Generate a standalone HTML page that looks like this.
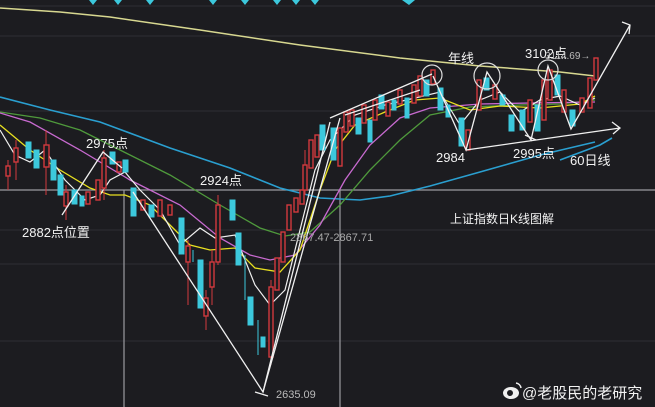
<!DOCTYPE html>
<html><head><meta charset="utf-8"><style>
html,body{margin:0;padding:0;background:#1c1c20;width:655px;height:407px;overflow:hidden}
svg{display:block}
text{font-family:"Liberation Sans","Noto Sans CJK SC",sans-serif;fill:#f2f2f2}
.r{fill:#1c1c20;stroke:#d23a3e;stroke-width:1.4}
.c{fill:#3cc8dc;stroke:#3cc8dc;stroke-width:1}
.w{fill:none;stroke:#f0f0f0;stroke-width:1.3}
</style></head><body>
<svg width="655" height="407" viewBox="0 0 655 407" xmlns="http://www.w3.org/2000/svg">
<rect width="655" height="407" fill="#1c1c20"/>
<g stroke="#2e2e34" stroke-width="1">
<line x1="0" y1="6" x2="655" y2="6"/><line x1="0" y1="36" x2="655" y2="36"/><line x1="0" y1="111" x2="655" y2="111"/>
<line x1="0" y1="230" x2="655" y2="230"/><line x1="0" y1="264" x2="655" y2="264"/><line x1="0" y1="341" x2="655" y2="341"/>
</g>
<g stroke="#9a9aa0" stroke-width="1.2"><line x1="0" y1="190" x2="655" y2="190"/><line x1="124" y1="190" x2="124" y2="407"/><line x1="340" y1="190" x2="340" y2="407"/></g>
<g fill="#3cc8dc">
<path d="M89 0h8l-4 5z"/><path d="M114 0h8l-4 5z"/><path d="M146 0h8l-4 5z"/><path d="M209 0h8l-4 5z"/><path d="M241 0h8l-4 5z"/><path d="M273 0h8l-4 5z"/><path d="M292 0h8l-4 5z"/><path d="M311 0h8l-4 5z"/><path d="M402 0h13l-6 5z"/>
</g>
<!-- MAs -->
<polyline fill="none" stroke="#d8d890" stroke-width="1.5" points="0,8 60,12 110,17 200,30 300,45 400,58 480,66 560,72 595,76"/>
<polyline fill="none" stroke="#2a9fd0" stroke-width="1.6" points="0,97 50,110 100,122 170,148 230,168 280,188 320,198 360,200 390,196 430,186 480,172 540,155 595,142"/>
<polyline fill="none" stroke="#4f9a3c" stroke-width="1.3" points="0,112 40,118 80,130 120,150 170,175 220,205 260,228 285,236 310,232 340,205 370,170 400,140 430,115 470,107 520,105 560,104 595,100"/>
<polyline fill="none" stroke="#c86ad0" stroke-width="1.3" points="0,113 30,122 80,150 130,180 180,205 220,238 250,255 270,260 295,255 320,225 345,180 370,145 400,118 430,108 480,104 530,103 595,102"/>
<polyline fill="none" stroke="#e8e020" stroke-width="1.3" points="0,125 30,150 60,170 90,188 110,195 125,195 150,205 170,225 190,245 210,250 235,248 255,268 280,272 300,250 320,190 335,150 355,125 385,112 415,100 440,98 470,110 500,106 540,108 580,104 595,96"/>
<polyline fill="none" stroke="#f0f0f0" stroke-width="1.2" points="0,130 15,155 30,162 45,150 65,180 85,200 100,195 110,180 125,172 140,190 160,210 180,245 200,228 215,238 235,235 255,285 270,305 285,290 300,230 315,170 330,140 355,115 385,105 415,98 440,92 460,125 480,100 500,92 520,112 540,100 560,96 580,105 595,98"/>
<!-- candles -->
<g>
<line x1="8" y1="160" x2="8" y2="190" stroke="#d23a3e"/><rect class="r" x="6" y="166" width="4" height="10"/>
<line x1="16" y1="140" x2="16" y2="180" stroke="#d23a3e"/><rect class="r" x="14" y="148" width="4" height="14"/>
<rect class="c" x="26" y="142" width="5" height="16"/><rect class="c" x="34" y="150" width="5" height="18"/>
<line x1="46" y1="130" x2="46" y2="195" stroke="#d23a3e"/><rect class="r" x="44" y="145" width="5" height="22"/>
<rect class="c" x="51" y="160" width="5" height="20"/><rect class="c" x="58" y="175" width="5" height="20"/>
<line x1="66" y1="185" x2="66" y2="220" stroke="#d23a3e"/><rect class="r" x="64" y="192" width="4" height="14"/>
<rect class="c" x="72" y="190" width="5" height="14"/><rect class="c" x="80" y="196" width="4" height="10"/>
<rect class="r" x="86" y="192" width="4" height="12"/><rect class="r" x="96" y="180" width="4" height="20"/>
<line x1="104" y1="150" x2="104" y2="200" stroke="#d23a3e"/><rect class="r" x="102" y="158" width="4" height="30"/>
<rect class="c" x="110" y="152" width="5" height="12"/><rect class="r" x="117" y="162" width="4" height="10"/>
<rect class="c" x="123" y="160" width="5" height="12"/><rect class="c" x="131" y="188" width="5" height="28"/>
<rect class="r" x="141" y="200" width="4" height="10"/><rect class="c" x="149" y="205" width="5" height="12"/>
<rect class="r" x="158" y="200" width="4" height="16"/><rect class="r" x="168" y="205" width="4" height="10"/>
<rect class="c" x="179" y="218" width="5" height="36"/>
<line x1="188" y1="240" x2="188" y2="305" stroke="#d23a3e"/><rect class="r" x="186" y="246" width="4" height="16"/>
<line x1="193" y1="250" x2="193" y2="262" stroke="#3cc8dc"/>
<rect class="c" x="198" y="260" width="5" height="48"/>
<line x1="206" y1="290" x2="206" y2="330" stroke="#d23a3e"/><rect class="r" x="204" y="298" width="4" height="18"/>
<line x1="212" y1="250" x2="212" y2="305" stroke="#d23a3e"/><rect class="r" x="210" y="262" width="4" height="25"/>
<line x1="218" y1="195" x2="218" y2="265" stroke="#d23a3e"/><rect class="r" x="216" y="205" width="4" height="57"/>
<rect class="c" x="230" y="200" width="5" height="20"/>
<rect class="c" x="236" y="233" width="5" height="32"/><line x1="245" y1="255" x2="245" y2="300" stroke="#3cc8dc"/>
<rect class="c" x="248" y="297" width="5" height="28"/><line x1="258" y1="320" x2="258" y2="355" stroke="#3cc8dc"/>
<rect class="c" x="261" y="337" width="4" height="10"/>
<line x1="271" y1="280" x2="271" y2="365" stroke="#d23a3e"/><rect class="r" x="269" y="287" width="4" height="70"/>
<rect class="r" x="275" y="258" width="4" height="32"/><rect class="r" x="281" y="232" width="4" height="30"/>
<rect class="r" x="287" y="205" width="4" height="25"/><rect class="r" x="294" y="198" width="4" height="14"/>
<rect class="r" x="300" y="190" width="4" height="14"/>
<line x1="305" y1="150" x2="305" y2="195" stroke="#d23a3e"/><rect class="r" x="303" y="165" width="4" height="25"/>
<rect class="r" x="309" y="140" width="4" height="28"/><rect class="r" x="315" y="135" width="4" height="22"/>
<rect class="c" x="320" y="125" width="5" height="25"/><rect class="c" x="331" y="128" width="5" height="32"/>
<rect class="r" x="338" y="128" width="4" height="38"/><rect class="r" x="344" y="112" width="4" height="20"/>
<rect class="r" x="350" y="110" width="4" height="16"/><rect class="c" x="356" y="118" width="5" height="16"/>
<rect class="r" x="362" y="105" width="4" height="18"/><rect class="c" x="368" y="120" width="4" height="22"/>
<rect class="r" x="373" y="100" width="4" height="20"/><rect class="c" x="379" y="95" width="5" height="14"/>
<rect class="r" x="386" y="102" width="4" height="14"/><rect class="c" x="392" y="100" width="4" height="10"/>
<rect class="r" x="398" y="90" width="4" height="14"/><rect class="c" x="405" y="98" width="4" height="20"/>
<rect class="r" x="412" y="85" width="4" height="18"/><rect class="r" x="418" y="76" width="4" height="20"/>
<rect class="c" x="424" y="80" width="5" height="16"/><rect class="r" x="431" y="70" width="4" height="14"/>
<rect class="c" x="438" y="88" width="5" height="22"/><rect class="c" x="446" y="105" width="4" height="12"/>
<rect class="c" x="459" y="118" width="5" height="28"/><rect class="r" x="466" y="130" width="4" height="20"/>
<rect class="r" x="477" y="80" width="4" height="30"/><rect class="c" x="484" y="78" width="5" height="12"/>
<rect class="r" x="493" y="85" width="4" height="14"/><rect class="c" x="500" y="95" width="5" height="10"/>
<rect class="c" x="509" y="115" width="5" height="16"/><rect class="c" x="520" y="110" width="5" height="20"/>
<rect class="r" x="528" y="100" width="4" height="22"/><rect class="c" x="535" y="105" width="5" height="26"/>
<rect class="r" x="542" y="80" width="4" height="40"/><rect class="r" x="548" y="70" width="4" height="30"/>
<rect class="c" x="555" y="75" width="5" height="20"/><rect class="r" x="562" y="90" width="4" height="22"/>
<rect class="c" x="570" y="110" width="5" height="16"/><rect class="r" x="580" y="98" width="4" height="14"/>
<rect class="r" x="588" y="78" width="4" height="30"/><rect class="r" x="594" y="58" width="4" height="22"/>
</g>
<!-- white annotation lines -->
<polyline class="w" points="62,215 103,152 122,168"/>
<polyline class="w" points="133,192 263,392 330,122"/>
<polyline class="w" points="263,392 340,118"/>
<polyline class="w" points="255,392 268,396"/>
<polyline class="w" points="330,118 432,74"/>
<polyline class="w" points="345,115 420,90"/>
<polyline class="w" points="433,76 466,150 487,72 531,140 548,66 571,129 630,25"/>
<polyline class="w" points="622,22 630,25 629,34"/>
<polyline class="w" points="466,150 620,128"/>
<polyline class="w" points="612,122 620,128 613,134"/>
<polyline class="w" points="525,135 536,140"/>
<polyline fill="none" stroke="#2a9fd0" stroke-width="1.6" points="560,160 600,145 612,138"/>
<circle cx="432" cy="75" r="10" fill="none" stroke="#ddd" stroke-width="1.2"/>
<circle cx="487" cy="76" r="13" fill="none" stroke="#ddd" stroke-width="1.2"/>
<circle cx="548" cy="70" r="10" fill="none" stroke="#ddd" stroke-width="1.2"/>
<g font-size="13">
<text x="86" y="148">2975点</text>
<text x="200" y="185">2924点</text>
<text x="22" y="237">2882点位置</text>
<text x="448" y="63">年线</text>
<text x="525" y="58">3102点</text>
<text x="436" y="162">2984</text>
<text x="513" y="158">2995点</text>
<text x="570" y="165">60日线</text>
<text x="450" y="223" font-size="12">上证指数日K线图解</text>
</g>
<text x="545" y="59" font-size="10" fill="#bbb" style="fill:#bbb">3114.69→</text>
<text x="290" y="241" font-size="11" style="fill:#aaa">2867.47-2867.71</text>
<text x="276" y="398" font-size="11" style="fill:#bbb">2635.09</text>
<g>
<ellipse cx="511" cy="393" rx="8" ry="6" fill="#f0f0f0"/><circle cx="510" cy="393" r="3" fill="#1c1c20"/>
<path d="M516 383a6 6 0 0 1 5 5" stroke="#f0f0f0" stroke-width="1.5" fill="none"/>
<text x="522" y="398" font-size="15">@老股民的老研究</text>
</g>
</svg>
</body></html>
